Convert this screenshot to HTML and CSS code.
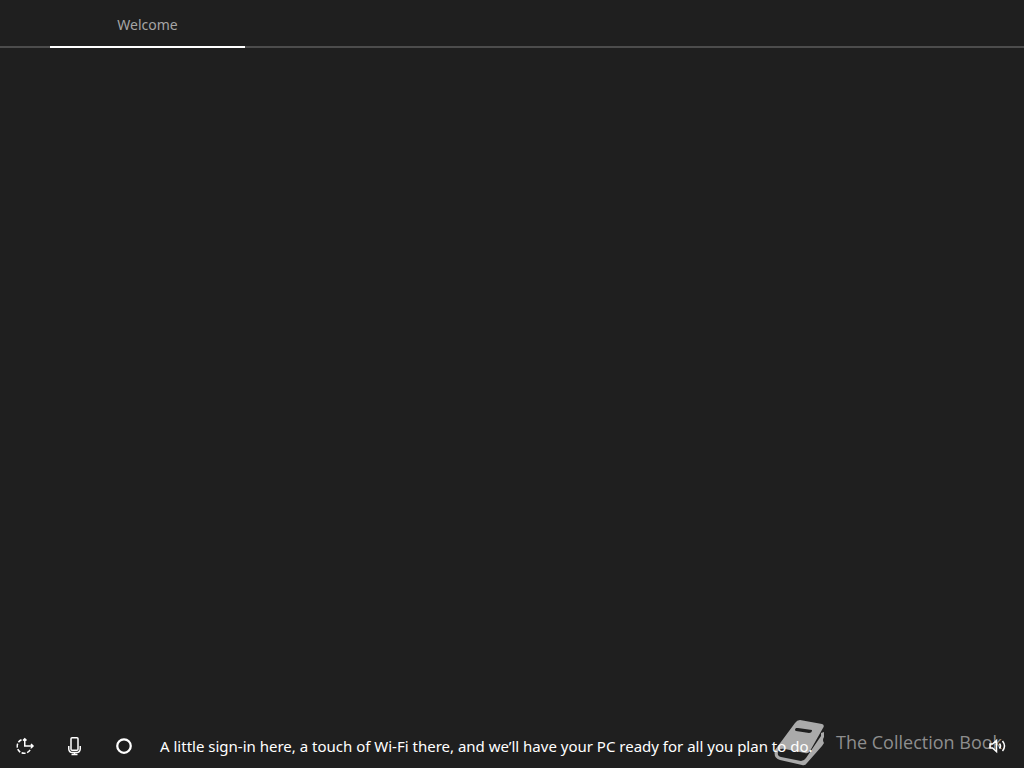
FILE: index.html
```
<!DOCTYPE html>
<html lang="en">
<head>
<meta charset="utf-8">
<title>Welcome</title>
<link rel="stylesheet" href="styles.css">
</head>
<body>
<nav class="tabs"><a class="tab" href="#welcome" aria-current="page">Welcome</a></nav>
<main class="stage" id="welcome"></main>
<footer class="bar">
  <div class="watermark">
    <svg class="book" viewBox="0 0 52 48" aria-hidden="true">
      <path fill="currentColor" fill-rule="evenodd" d="M21 4Q23 1 26 1L48 5Q51 6 49 9L36 32Q34 35 31 34L11 30Q5 29 4 33Q3 37 7 38L27 42Q30 42 32 39L47 17V14L50 13V18Q48 21 50 24L48 27L33 44Q31 47 28 46L6 41Q-1 39 1 31ZM22 9Q20 11 22 12L35 14Q38 14 38 11L24 9Z"/>
    </svg>
    <span class="brand">The Collection Book</span>
  </div>
  <button class="icon" type="button" aria-label="Ease of access">
    <svg width="20" height="20" viewBox="0 0 20 20" fill="none" stroke="currentColor" stroke-width="1.5">
      <path d="M9.75 3V10H18M16 8L18 10L16 12M8 4.5L9.75 2.75L11.5 4.5"/>
      <path stroke-dasharray="4 1.5" d="M6.5 3.8A7 7 0 1 0 15.8 12.5"/>
    </svg>
  </button>
  <button class="icon" type="button" aria-label="Microphone">
    <svg width="20" height="20" viewBox="0 0 20 20" fill="none" stroke="currentColor" stroke-width="1.5">
      <rect x="6" y="1.75" width="7" height="12.5" rx="1"/>
      <path d="M3.75 10V13Q4 16.5 7.5 16.5H11.5Q15 16.5 15.25 13V10M9.5 16.5V18.5M6.5 18.5H12.5"/>
    </svg>
  </button>
  <button class="icon" type="button" aria-label="Cortana">
    <svg width="20" height="20" viewBox="0 0 20 20" fill="none" stroke="currentColor" stroke-width="2.25"><circle cx="9" cy="10" r="6.75"/></svg>
  </button>
  <p class="caption">A little sign-in here, a touch of Wi-Fi there, and we’ll have your PC ready for all you plan to do.</p>
  <button class="icon volume" type="button" aria-label="Volume">
    <svg width="20" height="20" viewBox="0 0 20 20" fill="none" stroke="currentColor" stroke-width="1.5">
      <path d="M1 8H3.5L7.5 4.5V15.5L3.5 12H1ZM10.5 7.5Q12.5 10 10.5 12.5M13.5 5Q17.5 10 13.5 15"/>
    </svg>
  </button>
</footer>
</body>
</html>
```
FILE: styles.css
```
body {
  margin: 0;
  min-height: 100vh;
  display: flex;
  flex-direction: column;
  background: #1f1f1f;
  color: #fff;
  font-family: "Segoe UI", "Noto Sans", "Open Sans", sans-serif;
}

.tabs {
  display: flex;
  padding: 0 50px;
  box-shadow: inset 0 -2px #4c4c4c;
}

.tab {
  width: 195px;
  line-height: 50px;
  border-bottom: 2px solid #fff;
  box-sizing: border-box;
  height: 48px;
  color: #a5a5a5;
  font-size: 14px;
  text-align: center;
  text-decoration: none;
}

.stage {
  flex: 1;
}

.bar {
  position: relative;
  display: flex;
  align-items: center;
  height: 44px;
}

.icon {
  position: relative;
  display: flex;
  align-items: center;
  justify-content: center;
  flex: none;
  width: 50px;
  height: 44px;
  padding: 0;
  border: 0;
  background: none;
  color: #fff;
}

.caption {
  position: relative;
  flex: 1;
  margin: 0;
  padding-left: 10px;
  font-size: 15px;
  line-height: 20px;
  white-space: nowrap;
}

.watermark {
  position: absolute;
  right: 22px;
  bottom: 0;
  display: flex;
  align-items: center;
  gap: 10px;
  height: 50px;
  color: #8e8e8e;
  font-family: "Segoe UI", "Open Sans", "Noto Sans", sans-serif;
  font-size: 18px;
  line-height: 24px;
  white-space: nowrap;
}

.book {
  width: 52px;
  height: 48px;
  color: #aaa;
}

.brand {
  padding-bottom: 2px;
}
```
